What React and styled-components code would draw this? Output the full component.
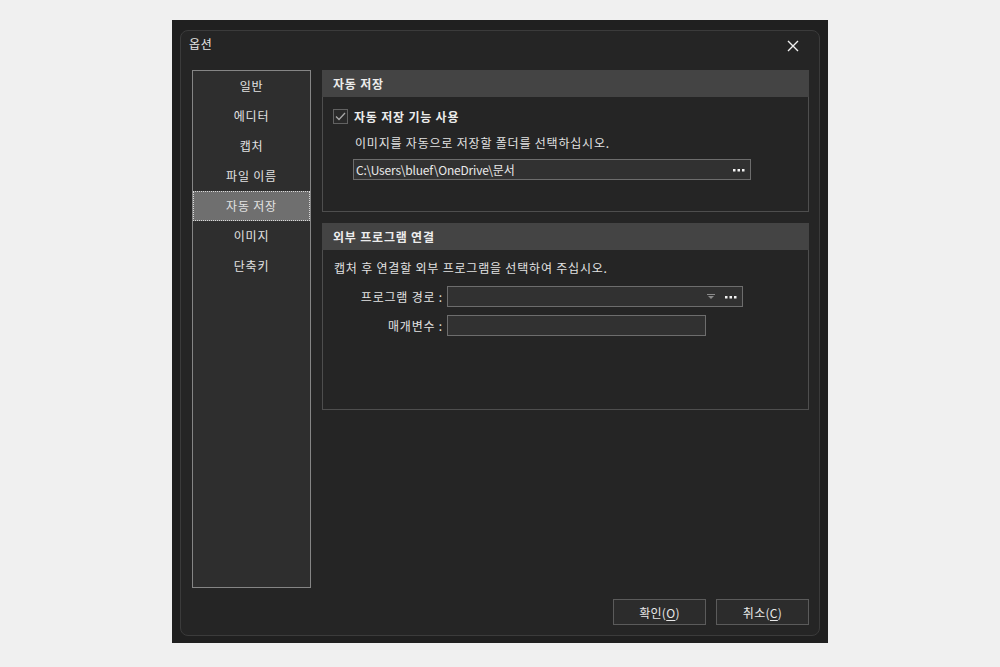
import React from 'react';
import styled, { createGlobalStyle } from 'styled-components';

const GlobalStyle = createGlobalStyle`
    body {
        margin: 0;
        background: #f0f0f0;
        font-family: "Noto Sans CJK KR", "Noto Sans", sans-serif;
        font-size: 12px;
        letter-spacing: 0.8px;
        color: #e4e4e4;
    }
`

const Page = styled.div`
    display: flex;
    justify-content: center;
    padding-top: 20px;
`

const Window = styled.div`
    width: 656px;
    height: 623px;
    background: #202020;
    box-sizing: border-box;
    padding: 10px 8px 7px 8px;
`

const Frame = styled.div`
    height: 100%;
    box-sizing: border-box;
    border: 1px solid #3b3b3b;
    border-radius: 8px;
    background: #252525;
    display: flex;
    flex-direction: column;
    padding: 0 10px 0 11px;
`

const TitleBar = styled.div`
    height: 39px;
    display: flex;
    align-items: flex-start;
    justify-content: space-between;
`

const Title = styled.div`
    margin-top: 4px;
    margin-left: -3px;
    font-size: 12px;
    color: #e6e6e6;
`

const CloseButton = styled.div`
    width: 14px;
    height: 14px;
    margin-top: 8px;
    margin-right: 9px;
    display: flex;
`

const Main = styled.div`
    display: flex;
    gap: 11px;
    height: 518px;
`

const Sidebar = styled.div`
    width: 119px;
    box-sizing: border-box;
    border: 1px solid #858585;
    background: #2e2e2e;
    display: flex;
    flex-direction: column;
`

const NavItem = styled.div`
    height: 30px;
    text-align: center;
    font-size: 12px;
    color: #e2e2e2;
    box-sizing: border-box;
    background: ${p => (p.$active ? '#6f6f6f' : 'transparent')};
    border: 1px dotted ${p => (p.$active ? '#d8d8d8' : 'transparent')};
    line-height: 28px;
`

const Content = styled.div`
    width: 487px;
    display: flex;
    flex-direction: column;
    gap: 11px;
`

const Group = styled.div`
    height: ${p => p.$h}px;
    box-sizing: border-box;
    border: 1px solid #4e4e4e;
    border-top: none;
    display: flex;
    flex-direction: column;
`

const GroupHeader = styled.div`
    height: 27px;
    background: #444444;
    font-weight: bold;
    font-size: 12px;
    color: #ececec;
    display: flex;
    align-items: center;
    padding-left: 11px;
    margin: 0 -1px;
`

const GroupBody = styled.div`
    padding: ${p => p.$pad};
    display: flex;
    flex-direction: column;
`

const CheckRow = styled.div`
    display: flex;
    align-items: center;
    gap: 6px;
    height: 16px;
    margin-left: 10px;
`

const CheckBox = styled.div`
    width: 15px;
    height: 15px;
    box-sizing: border-box;
    border: 1px solid #626262;
    background: #2a2a2a;
    display: flex;
    align-items: center;
    justify-content: center;
`

const BoldLabel = styled.span`
    font-weight: bold;
    color: #ececec;
`

const Text = styled.div`
    margin-left: ${p => p.$indent || 0}px;
    margin-top: ${p => p.$top || 0}px;
    height: 16px;
    line-height: 16px;
    color: #e2e2e2;
`

const Field = styled.div`
    width: ${p => p.$w}px;
    height: 21px;
    box-sizing: border-box;
    border: 1px solid #6d6d6d;
    background: #313131;
    display: flex;
    align-items: center;
    padding: 0 5px 0 2px;
    margin-left: ${p => p.$indent || 0}px;
    margin-top: ${p => p.$top || 0}px;
    color: #e8e8e8;
`

const FieldText = styled.span`
    flex: 1;
    white-space: nowrap;
    letter-spacing: -0.2px;
`

const FormRow = styled.div`
    display: flex;
    align-items: center;
    margin-top: ${p => p.$top || 0}px;
`

const FormLabel = styled.div`
    width: 124px;
    text-align: right;
    padding-right: 4px;
    box-sizing: border-box;
    color: #e2e2e2;
`

const Footer = styled.div`
    display: flex;
    justify-content: flex-end;
    gap: 10px;
    margin-top: 11px;
`

const Button = styled.div`
    width: 93px;
    height: 26px;
    box-sizing: border-box;
    border: 1px solid #5b5b5b;
    background: #2c2c2c;
    display: flex;
    align-items: center;
    justify-content: center;
    color: #e8e8e8;
    letter-spacing: 0.3px;
    u {
        text-decoration: underline;
        text-underline-offset: 2px;
    }
`

const Dots = () => (
    <svg width="12" height="4" viewBox="0 0 12 4">
        <rect x="0" y="1" width="2.5" height="2.5" fill="#f2f2f2" />
        <rect x="4.5" y="1" width="2.5" height="2.5" fill="#f2f2f2" />
        <rect x="9" y="1" width="2.5" height="2.5" fill="#f2f2f2" />
    </svg>
)

const DropArrow = () => (
    <svg width="8" height="6" viewBox="0 0 8 6" style={{ marginRight: 10 }}>
        <rect x="0" y="0" width="8" height="1" fill="#8a8a8a" />
        <path d="M1 2 L7 2 L4 5 Z" fill="#8a8a8a" />
    </svg>
)

const menu = ['일반', '에디터', '캡처', '파일 이름', '자동 저장', '이미지', '단축키']

export default function App() {
    return (
        <>
            <GlobalStyle />
            <Page>
                <Window>
                    <Frame>
                        <TitleBar>
                            <Title>옵션</Title>
                            <CloseButton>
                                <svg width="14" height="14" viewBox="0 0 14 14">
                                    <path d="M2 2 L12 12 M12 2 L2 12" stroke="#f0f0f0" strokeWidth="1.4" />
                                </svg>
                            </CloseButton>
                        </TitleBar>
                        <Main>
                            <Sidebar>
                                {menu.map((m) => (
                                    <NavItem key={m} $active={m === '자동 저장'}>{m}</NavItem>
                                ))}
                            </Sidebar>
                            <Content>
                                <Group $h={142}>
                                    <GroupHeader>자동 저장</GroupHeader>
                                    <GroupBody $pad="11px 0 0 0">
                                        <CheckRow>
                                            <CheckBox>
                                                <svg width="11" height="9" viewBox="0 0 11 9">
                                                    <path d="M1 4.5 L4 7.5 L10 1" stroke="#a9a9a9" strokeWidth="1.3" fill="none" />
                                                </svg>
                                            </CheckBox>
                                            <BoldLabel>자동 저장 기능 사용</BoldLabel>
                                        </CheckRow>
                                        <Text $indent={32} $top={11}>이미지를 자동으로 저장할 폴더를 선택하십시오.</Text>
                                        <Field $w={398} $indent={30} $top={8}>
                                            <FieldText>C:\Users\bluef\OneDrive\문서</FieldText>
                                            <Dots />
                                        </Field>
                                    </GroupBody>
                                </Group>
                                <Group $h={187}>
                                    <GroupHeader>외부 프로그램 연결</GroupHeader>
                                    <GroupBody $pad="10px 0 0 0">
                                        <Text $indent={11}>캡처 후 연결할 외부 프로그램을 선택하여 주십시오.</Text>
                                        <FormRow $top={10}>
                                            <FormLabel>프로그램 경로 :</FormLabel>
                                            <Field $w={296}>
                                                <FieldText />
                                                <DropArrow />
                                                <Dots />
                                            </Field>
                                        </FormRow>
                                        <FormRow $top={8}>
                                            <FormLabel>매개변수 :</FormLabel>
                                            <Field $w={259} />
                                        </FormRow>
                                    </GroupBody>
                                </Group>
                            </Content>
                        </Main>
                        <Footer>
                            <Button>확인(<u>O</u>)</Button>
                            <Button>취소(<u>C</u>)</Button>
                        </Footer>
                    </Frame>
                </Window>
            </Page>
        </>
    )
}
